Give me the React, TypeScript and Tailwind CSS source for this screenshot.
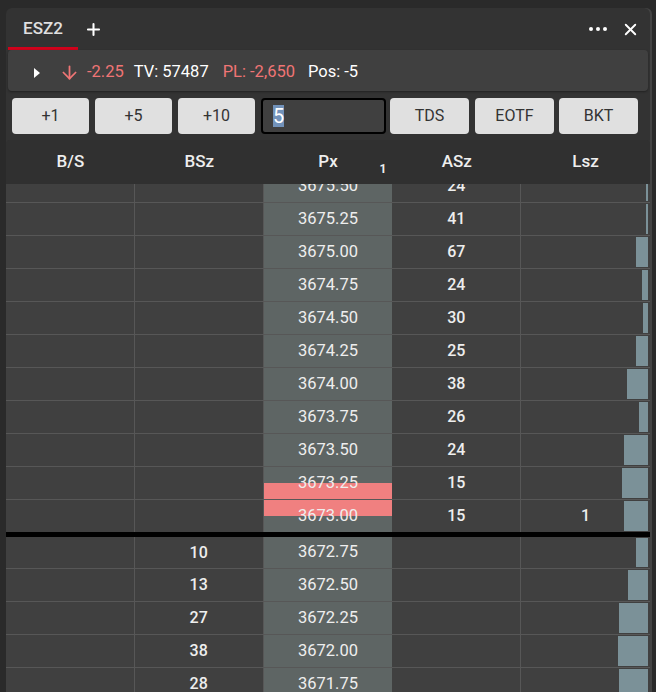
import { ArrowDown, Plus, X } from "lucide-react";

type Row = { px: string; bsz?: number; asz?: number; lsz?: string; bar: number; red?: "bottom" | "top" };

const asks: Row[] = [
  { px: "3675.50", asz: 24, bar: 2 },
  { px: "3675.25", asz: 41, bar: 2 },
  { px: "3675.00", asz: 67, bar: 12 },
  { px: "3674.75", asz: 24, bar: 6 },
  { px: "3674.50", asz: 30, bar: 5 },
  { px: "3674.25", asz: 25, bar: 12 },
  { px: "3674.00", asz: 38, bar: 21 },
  { px: "3673.75", asz: 26, bar: 9 },
  { px: "3673.50", asz: 24, bar: 24 },
  { px: "3673.25", asz: 15, bar: 26, red: "bottom" },
  { px: "3673.00", asz: 15, lsz: "1", bar: 24, red: "top" },
];

const bids: Row[] = [
  { px: "3672.75", bsz: 10, bar: 12 },
  { px: "3672.50", bsz: 13, bar: 20 },
  { px: "3672.25", bsz: 27, bar: 29 },
  { px: "3672.00", bsz: 38, bar: 30 },
  { px: "3671.75", bsz: 28, bar: 29 },
];

function LadderRow({ r, last, short }: { r: Row; last?: boolean; short?: boolean }) {
  const h = last ? "h-[37px] border-b-[5px] border-b-black" : short ? "h-[32px] border-b border-b-[#575757]" : "h-[33px] border-b border-b-[#575757]";
  return (
    <div className={`grid grid-cols-5 ${h} text-[16px] font-medium text-[#eeeeee]`}>
      <div className="border-r border-[#575757] bg-[#404040]" />
      <div className="flex items-center justify-center border-r border-[#575757] bg-[#404040]">{r.bsz}</div>
      <div className="relative flex flex-col bg-[#5e6564]">
        {r.red === "top" && <div className="h-[16px] bg-[#f08080]" />}
        {r.red === "bottom" && <div className="mt-auto h-[16px] bg-[#f08080]" />}
        <span className="absolute inset-0 flex items-center justify-center font-normal text-[16.5px]">{r.px}</span>
      </div>
      <div className="flex items-center justify-center border-r border-[#575757] bg-[#404040]">{r.asz}</div>
      <div className="relative flex items-stretch justify-end bg-[#404040] py-[1px] pr-[2px]">
        <div className="bg-[#7b9198]" style={{ width: r.bar }} />
        {r.lsz && <span className="absolute inset-0 flex items-center justify-center">{r.lsz}</span>}
      </div>
    </div>
  );
}

const btn = "flex h-[36px] items-center justify-center rounded-[4px] bg-[#e0e0e0] text-[16px] text-[#333]";

export default function App() {
  return (
    <div className="h-[692px] w-[656px] overflow-hidden bg-[#2a2a2a] pt-[8px] pl-[6px] [font-family:Roboto,'Liberation_Sans',sans-serif]">
      <div className="flex h-[684px] w-[644px] flex-col overflow-hidden rounded-t-[6px] bg-[#333333] shadow-[2px_0_0_#444]">
        {/* tab bar */}
        <div className="flex h-[42px] items-stretch">
          <div className="ml-[2px] flex w-[70px] items-center justify-center border-b-[3px] border-[#d0021b] pt-[3px] text-[17px] font-medium text-[#e0e0e0]">
            ESZ2
          </div>
          <div className="flex w-[30px] items-center justify-center">
            <Plus size={19} strokeWidth={2.6} className="text-white" />
          </div>
          <div className="ml-auto flex items-center gap-[14px] pr-[10px]">
            <div className="flex gap-[3px]">
              <span className="h-[4px] w-[4px] rounded-full bg-white" />
              <span className="h-[4px] w-[4px] rounded-full bg-white" />
              <span className="h-[4px] w-[4px] rounded-full bg-white" />
            </div>
            <X size={19} strokeWidth={2.4} className="text-white" />
          </div>
        </div>

        {/* info bar */}
        <div className="mx-[2px] flex h-[41px] items-center rounded-[4px] bg-[#404040] pl-[25px] pt-[3px] text-[16.5px] shadow-[0_1px_2px_#222]">
          <svg width="8" height="12" viewBox="0 0 8 12" className="mt-[1px]">
            <path d="M1 1 L7 6 L1 11 Z" fill="#ffffff" />
          </svg>
          <ArrowDown size={21} strokeWidth={2} className="ml-[18px] text-[#f07575]" />
          <span className="ml-[7px] text-[#f07575]">-2.25</span>
          <span className="ml-[10px] text-white">TV: 57487</span>
          <span className="ml-[14px] text-[#f07575]">PL: -2,650</span>
          <span className="ml-[13px] text-white">Pos: -5</span>
        </div>

        {/* buttons */}
        <div className="mt-[7px] flex h-[36px] items-center gap-[6px] pl-[6px]">
          <div className={`${btn} w-[77px]`}>+1</div>
          <div className={`${btn} w-[77px]`}>+5</div>
          <div className={`${btn} w-[77px]`}>+10</div>
          <div className="flex h-[36px] w-[125px] items-center rounded-[4px] border-2 border-black bg-[#404040] pl-[10px] text-[20px] text-white">
            <span className="bg-[#7292ba] leading-[22px]">5</span>
          </div>
          <div className={`${btn} -ml-[2px] w-[79px]`}>TDS</div>
          <div className={`${btn} w-[79px]`}>EOTF</div>
          <div className={`${btn} -ml-[1px] w-[79px]`}>BKT</div>
        </div>

        {/* header */}
        <div className="mt-[6px] grid h-[44px] grid-cols-5 rounded-t-[4px] bg-[#303030] text-[17px] font-medium text-[#eeeeee]">
          <div className="flex items-center justify-center">B/S</div>
          <div className="flex items-center justify-center">BSz</div>
          <div className="relative flex items-center justify-center">
            Px
            <span className="absolute bottom-[6px] right-[6px] text-[12px] font-bold">1</span>
          </div>
          <div className="flex items-center justify-center">ASz</div>
          <div className="flex items-center justify-center">Lsz</div>
        </div>

        {/* ladder */}
        <div className="flex-1 overflow-hidden">
          <div className="-mt-[14px]">
            {asks.map((r, i) => (
              <LadderRow key={r.px} r={r} last={i === asks.length - 1} />
            ))}
            {bids.map((r, i) => (
              <LadderRow key={r.px} r={r} short={i === 0} />
            ))}
          </div>
        </div>
      </div>
    </div>
  );
}
